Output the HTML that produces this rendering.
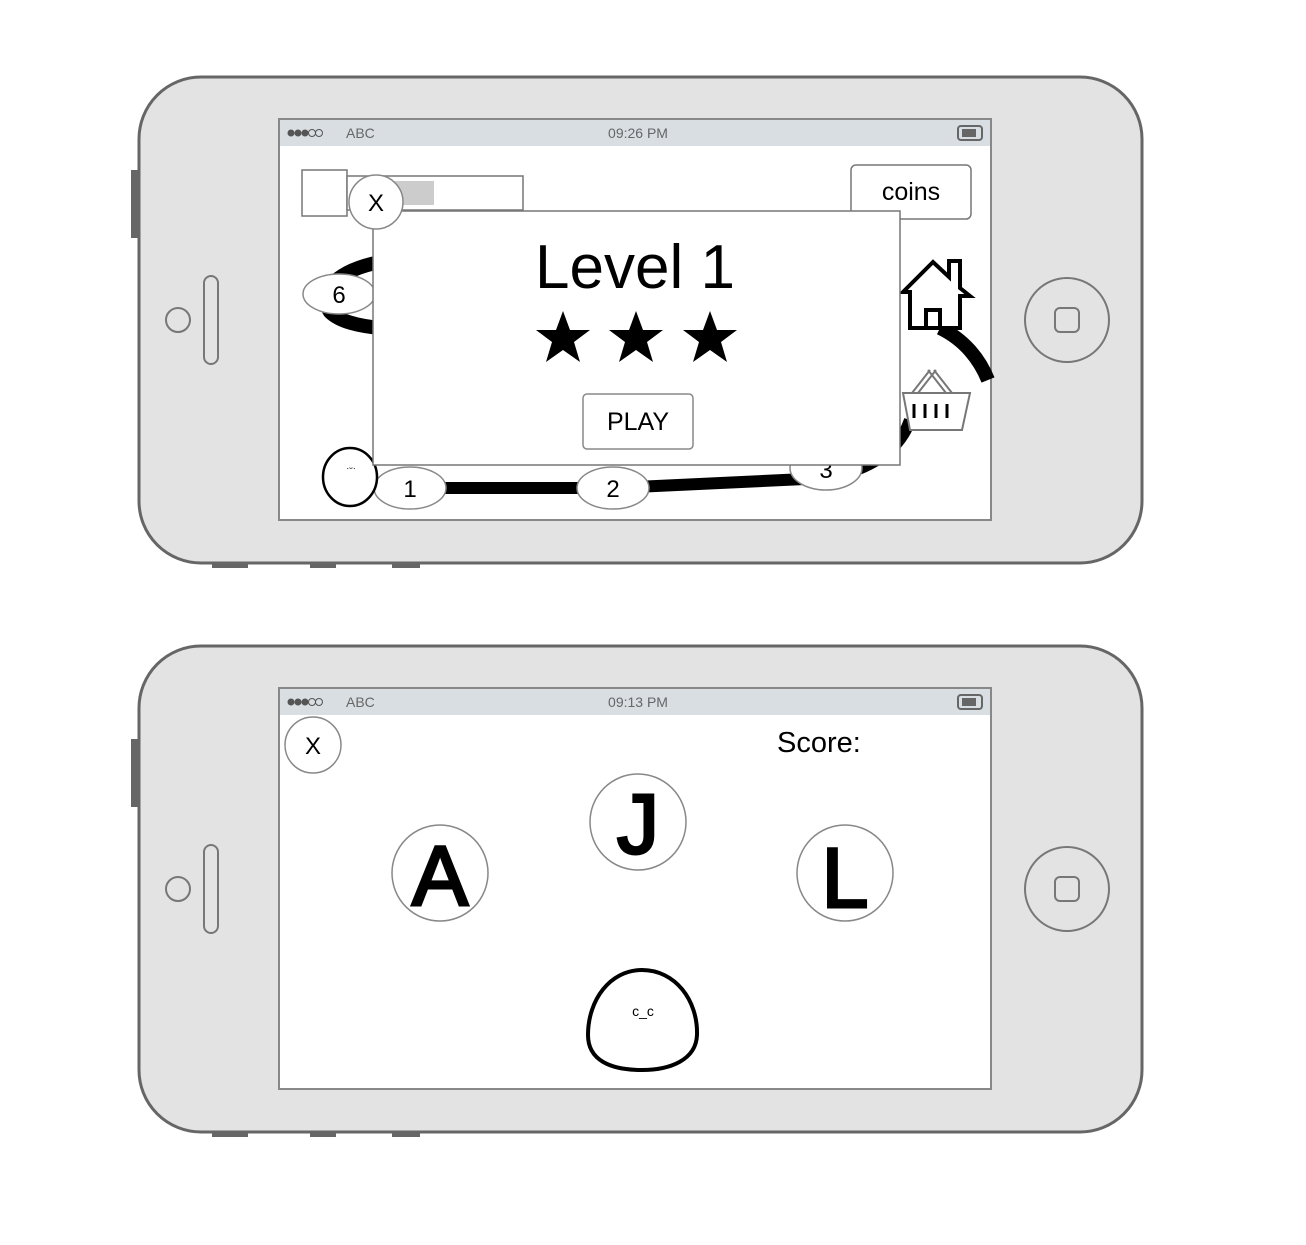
<!DOCTYPE html>
<html><head><meta charset="utf-8"><style>html,body{margin:0;padding:0;background:#fff}svg{display:block}text{font-family:"Liberation Sans",sans-serif}</style></head><body>
<svg width="1306" height="1245" viewBox="0 0 1306 1245" xmlns="http://www.w3.org/2000/svg">
<defs>
<g id="phone">
<rect x="131" y="170" width="9" height="68" fill="#666"/>
<rect x="212" y="561" width="36" height="7" fill="#666"/>
<rect x="310" y="561" width="26" height="7" fill="#666"/>
<rect x="392" y="561" width="28" height="7" fill="#666"/>
<rect x="139" y="77" width="1003" height="486" rx="62" fill="#e3e3e3" stroke="#666" stroke-width="3"/>
<rect x="279" y="119" width="712" height="401" fill="#fff" stroke="#888" stroke-width="2"/>
<rect x="280" y="120" width="710" height="26" fill="#d9dee3"/>
<circle cx="291" cy="133" r="3.5" fill="#555"/><circle cx="298" cy="133" r="3.5" fill="#555"/><circle cx="305" cy="133" r="3.5" fill="#555"/>
<circle cx="312" cy="133" r="3.5" fill="none" stroke="#555"/><circle cx="319" cy="133" r="3.5" fill="none" stroke="#555"/>
<text x="346" y="138" font-size="14" fill="#666">ABC</text>
<rect x="958" y="126" width="24" height="14" rx="3" fill="none" stroke="#666" stroke-width="2"/>
<rect x="962" y="129" width="14" height="8" fill="#666"/>
<circle cx="178" cy="320" r="12" fill="none" stroke="#777" stroke-width="2"/>
<rect x="204" y="276" width="14" height="88" rx="7" fill="none" stroke="#777" stroke-width="2"/>
<circle cx="1067" cy="320" r="42" fill="none" stroke="#777" stroke-width="2"/>
<rect x="1055" y="308" width="24" height="24" rx="5" fill="none" stroke="#777" stroke-width="2"/>
</g>
<path id="star" d="M0,-27 L7,-8 L27,-8 L11,4 L17,24 L0,12 L-17,24 L-11,4 L-27,-8 L-7,-8Z"/>
</defs>
<use href="#phone"/>
<text x="638" y="138" font-size="14" fill="#666" text-anchor="middle">09:26 PM</text>
<path d="M380,262 C340,270 315,290 330,312 C340,322 360,326 380,328" fill="none" stroke="#000" stroke-width="14"/>
<path d="M410,488 L613,488 L826,478 C870,470 900,450 910,420" fill="none" stroke="#000" stroke-width="12"/>
<path d="M940,328 C965,340 980,360 988,380" fill="none" stroke="#000" stroke-width="14"/>
<ellipse cx="339" cy="294" rx="36" ry="20" fill="#fff" stroke="#888" stroke-width="1.5"/>
<text x="339" y="303" font-size="24" text-anchor="middle">6</text>
<ellipse cx="826" cy="468" rx="36" ry="22" fill="#fff" stroke="#888" stroke-width="1.5"/>
<text x="826" y="478" font-size="24" text-anchor="middle">3</text>
<ellipse cx="410" cy="488" rx="36" ry="21" fill="#fff" stroke="#888" stroke-width="1.5"/>
<text x="410" y="497" font-size="24" text-anchor="middle">1</text>
<ellipse cx="613" cy="488" rx="36" ry="21" fill="#fff" stroke="#888" stroke-width="1.5"/>
<text x="613" y="497" font-size="24" text-anchor="middle">2</text>
<ellipse cx="350" cy="477" rx="27" ry="29" fill="#fff" stroke="#000" stroke-width="2.5"/>
<text x="351" y="471" font-size="9" text-anchor="middle">·ᵕ·</text>
<path d="M903,292 L933,262 L949,277 L949,261 L960,261 L960,288 L970,296 L960,296 L960,328 L910,328 L910,292 Z" fill="#fff" stroke="#000" stroke-width="4"/>
<rect x="926" y="310" width="14" height="18" fill="#fff" stroke="#000" stroke-width="4"/>
<path d="M912,393 L930,370 M952,393 L934,370 M918,393 L936,370 M946,393 L928,370" stroke="#777" stroke-width="2" fill="none"/>
<path d="M903,393 L970,393 L962,430 L910,430 Z" fill="#fff" stroke="#777" stroke-width="2"/>
<path d="M914,404v14M925,404v14M936,404v14M947,404v14" stroke="#000" stroke-width="3"/>
<rect x="302" y="170" width="45" height="46" fill="#fff" stroke="#777" stroke-width="1.5"/>
<rect x="347" y="176" width="176" height="34" fill="#fff" stroke="#777" stroke-width="1.5"/>
<rect x="372" y="181" width="62" height="24" fill="#ccc"/>
<rect x="851" y="165" width="120" height="54" rx="5" fill="#fff" stroke="#777" stroke-width="1.5"/>
<text x="911" y="200" font-size="25" text-anchor="middle">coins</text>
<rect x="373" y="211" width="527" height="254" fill="#fff" stroke="#777" stroke-width="1.5"/>
<circle cx="376" cy="202" r="27" fill="#fff" stroke="#888" stroke-width="1.5"/>
<text x="376" y="211" font-size="24" text-anchor="middle">X</text>
<text x="635" y="288" font-size="62" text-anchor="middle">Level 1</text>
<use href="#star" x="563" y="338"/><use href="#star" x="636" y="338"/><use href="#star" x="710" y="338"/>
<rect x="583" y="394" width="110" height="55" rx="4" fill="#fff" stroke="#888" stroke-width="1.5"/>
<text x="638" y="430" font-size="25" text-anchor="middle">PLAY</text>

<use href="#phone" y="569"/>
<text x="638" y="707" font-size="14" fill="#666" text-anchor="middle">09:13 PM</text>
<circle cx="313" cy="745" r="28" fill="#fff" stroke="#888" stroke-width="1.5"/>
<text x="313" y="754" font-size="24" text-anchor="middle">X</text>
<text x="777" y="752" font-size="29">Score:</text>
<circle cx="440" cy="873" r="48" fill="#fff" stroke="#888" stroke-width="1.5"/>
<text x="440" y="905" font-size="84" text-anchor="middle" stroke="#000" stroke-width="3">A</text>
<circle cx="638" cy="822" r="48" fill="#fff" stroke="#888" stroke-width="1.5"/>
<text x="638" y="853" font-size="84" text-anchor="middle" stroke="#000" stroke-width="3">J</text>
<circle cx="845" cy="873" r="48" fill="#fff" stroke="#888" stroke-width="1.5"/>
<text x="845" y="907" font-size="84" text-anchor="middle" stroke="#000" stroke-width="3">L</text>
<path d="M642,970 C675,970 698,1000 697,1035 C696,1060 670,1070 642,1070 C610,1070 588,1060 588,1035 C588,1000 610,970 642,970Z" fill="#fff" stroke="#000" stroke-width="4"/>
<text x="643" y="1016" font-size="14" text-anchor="middle">c_c</text>
</svg>
</body></html>
